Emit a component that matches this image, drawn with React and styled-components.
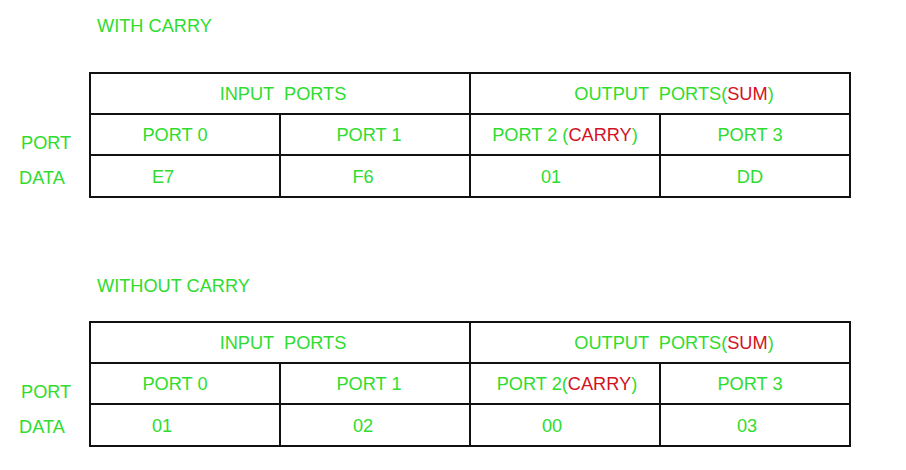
import React from 'react';
import styled, { createGlobalStyle } from 'styled-components';

const GREEN = '#2fdc2f';
const RED = '#d3121f';

const Global = createGlobalStyle`
  html, body { margin: 0; padding: 0; background: #fff; }
  body { font-family: "Liberation Sans", Arial, sans-serif; }
`;

const Page = styled.div`
  width: 906px;
  height: 470px;
  padding-top: 16px;
  box-sizing: border-box;
`;

const Section = styled.section`
  margin-bottom: ${p => p.$after || 0}px;
`;

const Title = styled.div`
  margin-left: 97px;
  height: 20px;
  line-height: 20px;
  font-size: 18.2px;
  color: ${GREEN};
  margin-bottom: ${p => p.$gap}px;
`;

// one grid: label column + four port columns
const Grid = styled.div`
  display: grid;
  grid-template-columns: 89px 192px repeat(3, 190px);
  grid-template-rows: 43px 41px 42px;
  font-size: 18.2px;
  color: ${GREEN};
`;

const Label = styled.div`
  display: flex;
  align-items: center;
  padding-left: ${p => p.$indent}px;
  padding-top: ${p => p.$drop || 2}px;
`;

const Cell = styled.div`
  display: flex;
  align-items: center;
  justify-content: center;
  box-sizing: border-box;
  grid-column: span ${p => p.$span || 1};
  border-right: 2px solid #111;
  border-bottom: 2px solid #111;
  border-left: ${p => (p.$first ? '2px solid #111' : 'none')};
  border-top: ${p => (p.$top ? '2px solid #111' : 'none')};
  padding-top: 2px;
  padding-left: ${p => (p.$shift > 0 ? p.$shift * 2 : 0)}px;
  padding-right: ${p => (p.$shift < 0 ? -p.$shift * 2 : 0)}px;
  white-space: pre;
`;

const Red = styled.span`
  color: ${RED};
`;

const PortTable = ({ carryLabel, ports, data }) => (
  <Grid>
    <Label />
    <Cell $span={2} $first $top $shift={3}>INPUT  PORTS</Cell>
    <Cell $span={2} $top $shift={14}>OUTPUT  PORTS(<Red>SUM</Red>)</Cell>

    <Label $indent={21} $drop={16}>PORT</Label>
    <Cell $first $shift={ports[0]}>PORT 0</Cell>
    <Cell $shift={ports[1]}>PORT 1</Cell>
    <Cell $shift={ports[2]}>{carryLabel}(<Red>CARRY</Red>)</Cell>
    <Cell $shift={ports[3]}>PORT 3</Cell>

    <Label $indent={19}>DATA</Label>
    {data.map((d, i) => (
      <Cell key={i} $first={i === 0} $shift={d.shift}>{d.value}</Cell>
    ))}
  </Grid>
);

export default function App() {
  return (
    <Page>
      <Global />
      <Section $after={78}>
        <Title $gap={36}>WITH CARRY</Title>
        <PortTable
          carryLabel="PORT 2 "
          ports={[-10, -6, 0, -5]}
          data={[
            { value: 'E7', shift: -22 },
            { value: 'F6', shift: -12 },
            { value: '01', shift: -14 },
            { value: 'DD', shift: -5 },
          ]}
        />
      </Section>
      <Section>
        <Title $gap={25}>WITHOUT CARRY</Title>
        <PortTable
          carryLabel="PORT 2"
          ports={[-10, -6, 2, -5]}
          data={[
            { value: '01', shift: -23 },
            { value: '02', shift: -12 },
            { value: '00', shift: -13 },
            { value: '03', shift: -8 },
          ]}
        />
      </Section>
    </Page>
  );
}
